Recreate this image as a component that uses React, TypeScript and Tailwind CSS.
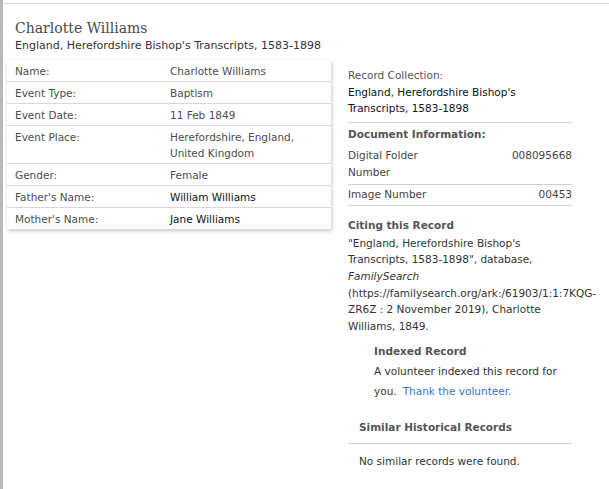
export default function App() {
    const rows: { label: string; value: string; dark?: boolean }[] = [
        { label: "Name:", value: "Charlotte Williams" },
        { label: "Event Type:", value: "Baptism" },
        { label: "Event Date:", value: "11 Feb 1849" },
        { label: "Event Place:", value: "Herefordshire, England, United Kingdom" },
        { label: "Gender:", value: "Female" },
        { label: "Father's Name:", value: "William Williams", dark: true },
        { label: "Mother's Name:", value: "Jane Williams", dark: true },
    ];

    return (
        <div className="w-[609px] h-[489px] overflow-hidden bg-white border-l-[3px] border-[#b9b9b9] pt-[3px] text-[10.5px] text-[#444] font-['DejaVu_Sans','Verdana',sans-serif]">
            <div className="h-full border-t border-[#dedede]">
                <div className="pl-[12px] pt-[15px]">
                    <h1 className="text-[14px] leading-[18px] text-[#4a4a4a] font-['DejaVu_Serif',serif]">Charlotte Williams</h1>
                    <p className="text-[11px] leading-[15px] mt-[1px] text-[#333]">England, Herefordshire Bishop's Transcripts, 1583-1898</p>
                </div>

                <div className="flex items-start mt-[7px]">
                    <div className="ml-[4px] w-[324px] shadow-[1px_2px_4px_rgba(0,0,0,0.22)] bg-white">
                        {rows.map((r, i) => (
                            <div key={r.label} className={`flex leading-[16px] pt-[3px] pb-[2px] ${i < rows.length - 1 ? "border-b border-[#d8d8d8]" : ""}`}>
                                <div className="w-[163px] pl-[8px] shrink-0 text-[#4d4d4d]">{r.label}</div>
                                <div className={`pr-[8px] ${r.dark ? "text-[#111]" : "text-[#4d4d4d]"}`}>{r.value}</div>
                            </div>
                        ))}
                    </div>

                    <div className="ml-[17px] w-[224px] pt-[7px] leading-[16.6px]">
                        <p className="text-[#555]">Record Collection:</p>
                        <p className="text-[#111]">England, Herefordshire Bishop's Transcripts, 1583-1898</p>

                        <div className="border-t border-[#cfcfcf] mt-[5px] pt-[3px]">
                            <p className="font-bold text-[#555]">Document Information:</p>
                            <div className="flex justify-between mt-[5px] pb-[3px] border-b border-[#cfcfcf]">
                                <span className="w-[90px]">Digital Folder Number</span>
                                <span>008095668</span>
                            </div>
                            <div className="flex justify-between pt-[1px] pb-[3px] border-b border-[#cfcfcf]">
                                <span>Image Number</span>
                                <span>00453</span>
                            </div>
                        </div>

                        <div className="mt-[11px]">
                            <p className="font-bold text-[#555]">Citing this Record</p>
                            <p className="mt-[1px] text-[#333]">
                                "England, Herefordshire Bishop's Transcripts, 1583-1898", database, <i>FamilySearch</i> (https://familysearch.org/ark:/61903/1:1:7KQG-ZR6Z : 2 November 2019), Charlotte Williams, 1849.
                            </p>
                        </div>

                        <div className="pl-[26px] mt-[9px] leading-[20px]">
                            <p className="font-bold text-[#555] leading-[17px]">Indexed Record</p>
                            <p className="text-[#333] mt-[1px]">A volunteer indexed this record for</p>
                            <div className="flex gap-[6px]">
                                <span className="text-[#333]">you.</span>
                                <a href="#" className="text-[#2a78d4]">Thank the volunteer.</a>
                            </div>
                        </div>

                        <div className="mt-[18px]">
                            <p className="font-bold text-[#555] pl-[11px] pb-[7px] border-b border-[#cfcfcf]">Similar Historical Records</p>
                            <p className="pl-[11px] pt-[9px] text-[#333]">No similar records were found.</p>
                        </div>
                    </div>
                </div>
            </div>
        </div>
    );
}
